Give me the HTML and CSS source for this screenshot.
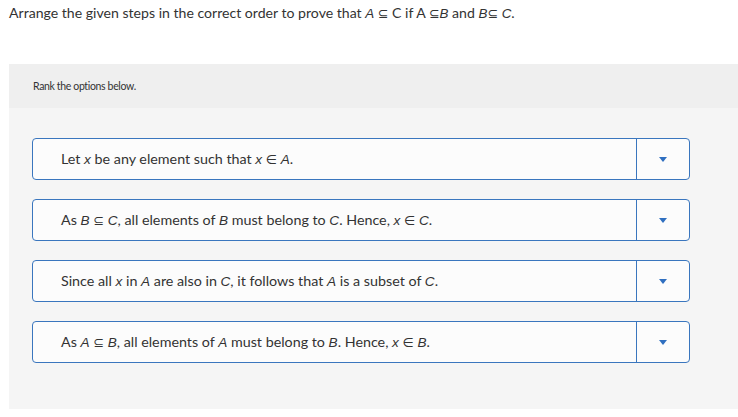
FILE: index.html
```html
<!DOCTYPE html>
<html>
<head>
<meta charset="utf-8">
<link rel="stylesheet" href="styles.css">
</head>
<body>
<p class="prompt">Arrange the given steps in the correct order to prove that <i>A</i> <span class="sym">⊆</span> C if A <span class="sym">⊆</span><i>B</i> and <i>B</i><span class="sym">⊆</span> <i>C</i>.</p>
<section class="panel">
  <div class="panel-head">Rank the options below.</div>
  <ol class="options">
    <li class="option">
      <div class="option-text">Let <i>x</i> be any element such that <i>x</i> <span class="sym">∈</span> <i>A</i>.</div>
      <div class="option-toggle"><span class="caret"></span></div>
    </li>
    <li class="option">
      <div class="option-text">As <i>B</i> <span class="sym">⊆</span> <i>C</i>, all elements of <i>B</i> must belong to <i>C</i>. Hence, <i>x</i> <span class="sym">∈</span> <i>C</i>.</div>
      <div class="option-toggle"><span class="caret"></span></div>
    </li>
    <li class="option">
      <div class="option-text">Since all <i>x</i> in <i>A</i> are also in <i>C</i>, it follows that <i>A</i> is a subset of <i>C</i>.</div>
      <div class="option-toggle"><span class="caret"></span></div>
    </li>
    <li class="option">
      <div class="option-text">As <i>A</i> <span class="sym">⊆</span> <i>B</i>, all elements of <i>A</i> must belong to <i>B</i>. Hence, <i>x</i> <span class="sym">∈</span> <i>B</i>.</div>
      <div class="option-toggle"><span class="caret"></span></div>
    </li>
  </ol>
</section>
</body>
</html>
```

FILE: styles.css
```css
* { box-sizing: border-box; }
html, body { margin: 0; padding: 0; background: #fff; }
body {
  font-family: "Lato", "Liberation Sans", sans-serif;
  color: #333;
  width: 738px;
  height: 417px;
  overflow: hidden;
}
i {
  font-family: "Liberation Sans", sans-serif;
  font-style: italic;
  font-size: 0.95em;
}
.sym {
  font-family: "DejaVu Sans", sans-serif;
  font-size: 0.9em;
}
.prompt {
  margin: 0;
  padding: 4px 0 0 9px;
  font-size: 14.1px;
  line-height: 17px;
  height: 64px;
}
.panel {
  margin-left: 9px;
  background: #f5f5f5;
  height: 345px;
}
.panel-head {
  background: #efefef;
  height: 44px;
  padding: 15px 0 0 24px;
  font-size: 10.5px;
  letter-spacing: -0.35px;
  line-height: 15px;
  color: #333;
}
.options {
  list-style: none;
  margin: 0;
  padding: 30px 48px 0 23px;
  display: flex;
  flex-direction: column;
  gap: 19px;
}
.option {
  display: flex;
  height: 42px;
  border: 1px solid #3a76be;
  border-radius: 4px;
  background: #fcfcfc;
}
.option-text {
  flex: 1;
  padding-left: 28px;
  font-size: 14.3px;
  line-height: 40px;
  white-space: nowrap;
}
.option-toggle {
  width: 53px;
  border-left: 1px solid #3a76be;
  display: flex;
  align-items: center;
  justify-content: center;
}
.caret {
  width: 0;
  height: 0;
  border-left: 4px solid transparent;
  border-right: 4px solid transparent;
  border-top: 5px solid #2f6fc0;
}
```
